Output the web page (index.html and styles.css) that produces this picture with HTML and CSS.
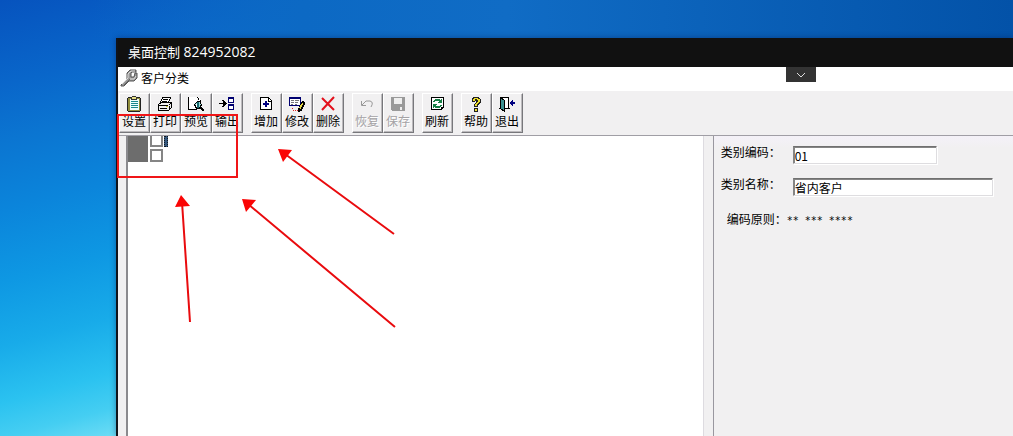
FILE: index.html
```html
<!DOCTYPE html>
<html lang="zh-CN">
<head>
<meta charset="utf-8">
<meta name="viewport" content="width=device-width, initial-scale=1">
<title>桌面控制</title>
<link rel="stylesheet" href="styles.css">
</head>
<body class="desktop">
<div class="window">
  <header class="titlebar">桌面控制 <span class="session-id">824952082</span></header>
  <main class="session">
    <button class="pull-tab" type="button" aria-label="展开"><svg width="10" height="6" viewBox="0 0 10 6" fill="none" stroke="#ddd"><path d="M1 1l4 4 4-4"/></svg></button>
    <div class="caption">
      <svg width="18" height="18" viewBox="0 0 18 18" aria-hidden="true"><path d="M1 16L7 10V4l3-3h6v2h-4L11 4v4h3l1-4h2v5l-3 3H9l-5 5H1z" fill="#999" stroke="#555"/><path d="M2 15l6-6V5l3-3h4M10 10h4l2-3" fill="none" stroke="#ddd"/><path d="M4 16l6-6" stroke="#666"/></svg>
      <span>客户分类</span>
    </div>
    <nav class="toolbar">
      <div class="group">
        <button type="button" class="tool"><svg class="icon" viewBox="0 0 16 16"><path fill="#222" d="M2 1h12v1h1v13h-1v1H2v-1H1V2h1z"/><path fill="#8f8c3c" d="M2 2h12v13H2z"/><path fill="#efffff" d="M4 3h9v11H4z"/><path fill="#333" d="M5 1h1V0h4v1h1v3H5z"/><path fill="#e5df86" d="M6 1h4v2H6z"/><path stroke="#18898e" d="M5 5.500h7M5 7.500h7M5 9.500h7M5 11.500h7"/></svg><span>设置</span></button>
        <button type="button" class="tool"><svg class="icon" viewBox="0 0 16 16"><path fill="#fff" stroke="#000" d="M5.500 1.500h8l-2 5h-8z"/><path fill="#eee" stroke="#000" d="M1.500 8.500l3-2h10v5l-3 3h-10z"/><path fill="none" stroke="#000" d="M6 3.500h5M5 5.500h5M1 9.500h10M12 9l3-3M12 14V10M3 12.500h7M14 9.500v2"/><path fill="#cc3" d="M9 10h2v1H9z"/></svg><span>打印</span></button>
        <button type="button" class="tool"><svg class="icon" viewBox="0 0 16 16"><path fill="#fff" d="M1 1h9l3 3v9H1z"/><path fill="none" stroke="#000" d="M.5 1v13M0 13.500h9M9 1.500h1M10.500 2v2M12.500 4v2"/><path fill="#9dd" stroke="#000" d="M6.500 8.500l3-3h2l2 3-2 4h-3z"/><path fill="#17696c" d="M9 6h2v6H9z"/><path stroke="#000" stroke-width="2" d="M12 11l4 4"/><path fill="#fff" d="M8 8h1v3H8z"/></svg><span>预览</span></button>
        <button type="button" class="tool"><svg class="icon" viewBox="0 0 16 16"><path fill="#000" d="M0 7h4V5H3V4h2v1h1v1h1v1h1v1H7v1H6v1H5v1H3v-1h1V8H0z"/><path fill="#fff" stroke="#000070" d="M9.500 1.500h5v5h-5zM9.500 8.500h5v5h-5z"/><path stroke="#000070" d="M9 2h6M9 9h6" stroke-width="2"/></svg><span>输出</span></button>
      </div>
      <div class="group">
        <button type="button" class="tool"><svg class="icon" viewBox="0 0 16 16"><path fill="#fff" stroke="#000" d="M2.500 1.500h8l3 3v9h-11z"/><path fill="none" stroke="#000" d="M10.500 1v4H14"/><path fill="#000080" d="M7 5h2v2h2v2H9v2H7V9H5V7h2z"/></svg><span>增加</span></button>
        <button type="button" class="tool"><svg class="icon" viewBox="0 0 16 16"><path fill="#fff" stroke="#000070" d="M.5 1.500h11v8H.5z"/><path stroke="#000070" stroke-width="2" d="M0 2h12"/><path stroke="#777" d="M2 4.500h3M6 4.500h4M2 6.500h3M6 6.500h3M2 8.500h2M6 8.500h2"/><path fill="#000" d="M13 5h2v1h1v3h-1v2h-1v2h-1v2h-2v1H9v-4h1v-2h1V8h1V6h1z"/><path fill="#e8d94a" d="M13 7h1v2h-1v2h-1v2h-1v-1h-1v-1h1V9h1V8h1z"/><path fill="#d22" d="M3 12h1v1H3zM4 14h1v1H4zM6 14h1v1H6zM8 14h1v1H8z"/></svg><span>修改</span></button>
        <button type="button" class="tool"><svg class="icon smooth" viewBox="0 0 16 16"><path stroke="#e3101c" stroke-width="2" d="M2 2l12 12M14 1L2 14"/></svg><span>删除</span></button>
      </div>
      <div class="group">
        <button type="button" class="tool" disabled><svg class="icon smooth" viewBox="0 0 16 16"><path fill="none" stroke="#999" d="M2.500 5v4.500H7M3 9l4-4h4q4 1 1 6"/></svg><span>恢复</span></button>
        <button type="button" class="tool" disabled><svg class="icon" viewBox="0 0 16 16"><path fill="#999" d="M1 1h14v14H2l-1-1z"/><path fill="#eee" d="M4 2h8v6H4zM10 11h2v3h-2z"/></svg><span>保存</span></button>
      </div>
      <div class="group">
        <button type="button" class="tool"><svg class="icon" viewBox="0 0 16 16"><path fill="#fff" stroke="#000" d="M2.500 1.500h12v10l-2 2h-10z"/><path fill="none" stroke="#000" d="M12.500 14v-2.500H15"/><path fill="#168045" d="M6 3h5v1h1V3h1v4H9V6h1V5H6v1H4V5h1V4h1zM4 8h4v1H7v1h4V9h2v1h-1v1h-1v1H6v-1H5v1H4z"/></svg><span>刷新</span></button>
      </div>
      <div class="group">
        <button type="button" class="tool"><svg class="icon" viewBox="0 0 16 16"><path fill="#222" d="M5 1h6v1h1v1h1v4h-1v1h-1v1h-1v2H6V8h1V7h1V5H7v1H4V2h1zM6 12h4v4H6z"/><path fill="#f0e12b" d="M6 2h4v1h2v3h-1v1h-1v1H9v2H7V8h1V7h1V6h1V4H9V3H7v2H5V3h1zM7 13h2v2H7z"/></svg><span>帮助</span></button>
        <button type="button" class="tool"><svg class="icon" viewBox="0 0 16 16"><path fill="#fff" stroke="#000" d="M1.500 1.500h8v11h-8z"/><path fill="#3b9292" stroke="#000" d="M1.500 1.500l4 3v11l-4-3z"/><path fill="#000080" d="M11 6h1V5h1V4h1v2h2v2h-2v2h-1V9h-1V8h-1z"/><path stroke="#000" d="M0 12.500h2M7 12.500h4"/></svg><span>退出</span></button>
      </div>
    </nav>
    <div class="workspace">
      <section class="tree" aria-label="分类">
        <div class="tree-block"></div>
        <div class="nodes">
          <div class="node"><input class="tick clipped" type="checkbox" aria-label="节点一"><i class="selection"></i></div>
          <div class="node"><input class="tick" type="checkbox" aria-label="节点二"></div>
        </div>
      </section>
      <form class="details">
        <div class="field"><label for="code">类别编码：</label><input id="code" class="text short" type="text" value="01"></div>
        <div class="field"><label for="name">类别名称：</label><input id="name" class="text" type="text" value="省内客户"></div>
        <p class="rule"><span>编码原则：</span><span class="mask">** *** ****</span></p>
      </form>
    </div>
  </main>
</div>
<svg class="marks" width="400" height="330" viewBox="0 0 400 330" aria-hidden="true">
  <path d="M118 115h119v62H118z" fill="none" stroke="#f01518" stroke-width="2"/>
  <path d="M190 322l-8-120M395 327L248 204M394 234L285 154" fill="none" stroke="#e90b0e" stroke-width="2"/>
  <path d="M181 195l9 11-15 1zM242 199l14 1-10 12zM278 149l14 1-9 12z" fill="#fa0505"/>
</svg>
</body>
</html>
```
FILE: styles.css
```css
* { box-sizing: border-box; }

.desktop {
  margin: 0;
  min-height: 100vh;
  display: flex;
  padding: 38px 0 0 116px;
  position: relative;
  overflow: hidden;
  font: 12px/16px "Noto Sans CJK SC", sans-serif;
  color: #000;
  background:
    linear-gradient(90deg, transparent 9%, #0c69c4 30%, #106cc5 50%, #0352a8) top / 100% 38px no-repeat,
    linear-gradient(165deg, #0653be 0%, #0966ca 12%, #0b75d1 20%, #0b85db 30%, #0e98e3 40%, #18abe9 49%, #2bc2f0 57%, #45cef2 62%, #6cdcf5 66%);
}

.window {
  flex: 1;
  display: flex;
  flex-direction: column;
  border-left: 2px solid #10131a;
  box-shadow: 0 0 6px rgba(0, 20, 70, 0.4);
}

.titlebar {
  background: #111;
  color: #fff;
  padding: 0 10px;
  font: 13px/28px "Open Sans", "Noto Sans CJK SC", sans-serif;
  height: 29px;
}

.session-id { font-size: 14px; }

.session {
  flex: 1;
  display: flex;
  flex-direction: column;
  position: relative;
  background: #f1f0f1;
}

.pull-tab {
  position: absolute;
  top: 0;
  right: 22%;
  width: 30px;
  height: 15px;
  padding: 0;
  border: 0;
  display: grid;
  place-items: center;
  background: #333;
}

.caption {
  display: flex;
  align-items: center;
  gap: 3px;
  height: 24px;
  padding: 0 2px 2px;
  background: #fff;
}

.toolbar {
  display: flex;
  gap: 8px;
  padding: 2px 1px;
  border-bottom: 1px solid #a09ea5;
  height: 45px;
}

.group { display: flex; }

.tool {
  width: 31px;
  height: 40px;
  padding: 2px 1px 0 0;
  border: 1px solid;
  border-color: #fff #77777b #77777b #fff;
  box-shadow: inset -1px -1px #bcbabd;
  background: #f1f0f1;
  font: inherit;
  color: #000;
  display: flex;
  flex-direction: column;
  align-items: center;
  gap: 1px;
}

.tool:disabled {
  color: #a4a2a5;
  text-shadow: 1px 1px #fff;
}

.icon {
  width: 16px;
  height: 16px;
  flex: none;
  shape-rendering: crispEdges;
}

.smooth { shape-rendering: auto; }

.workspace {
  flex: 1;
  display: flex;
  padding-left: 8px;
}

.tree {
  flex: 576;
  display: flex;
  align-items: flex-start;
  gap: 2px;
  background: #fff;
  border-left: 2px solid #8b8a8e;
  border-right: 1px solid #dddbe0;
}

.tree-block {
  width: 20px;
  height: 26px;
  background: #6d6d6d;
}

.nodes {
  display: grid;
  gap: 2px;
}

.node {
  display: flex;
  gap: 1px;
}

.tick {
  appearance: none;
  width: 13px;
  height: 13px;
  margin: 0;
  border: 2px solid #858585;
  background: #fff;
}

.clipped {
  height: 11px;
  border-top: 0;
}

.selection {
  width: 4px;
  height: 11px;
  background: #36587d;
  border: 1px dotted #101820;
}

.details {
  flex: 286;
  margin-left: 9px;
  padding: 10px 7px;
  border-left: 1px solid #99979f;
  background: linear-gradient(#f4f1f8, #f1f0f1 12px);
}

.field {
  display: flex;
  margin-bottom: 14px;
}

.field label {
  width: 72px;
  flex: none;
  line-height: 12px;
}

.text {
  width: 200px;
  height: 18px;
  padding: 0 1px;
  border: 1px solid;
  border-color: #707070 #dedde0 #dedde0 #858585;
  box-shadow: inset 1px 1px #858585, 1px 1px #fff;
  background: #fff;
  color: #000;
  font: 12px/16px "Noto Sans CJK SC", sans-serif;
}

.short { width: 144px; }

.rule {
  display: flex;
  align-items: center;
  margin: 0;
  padding: 1px 6px;
}

.mask {
  font: 10px/12px "DejaVu Sans Mono", monospace;
  padding-top: 3px;
}

.marks {
  position: absolute;
  left: 0;
  top: 0;
  pointer-events: none;
}
```
